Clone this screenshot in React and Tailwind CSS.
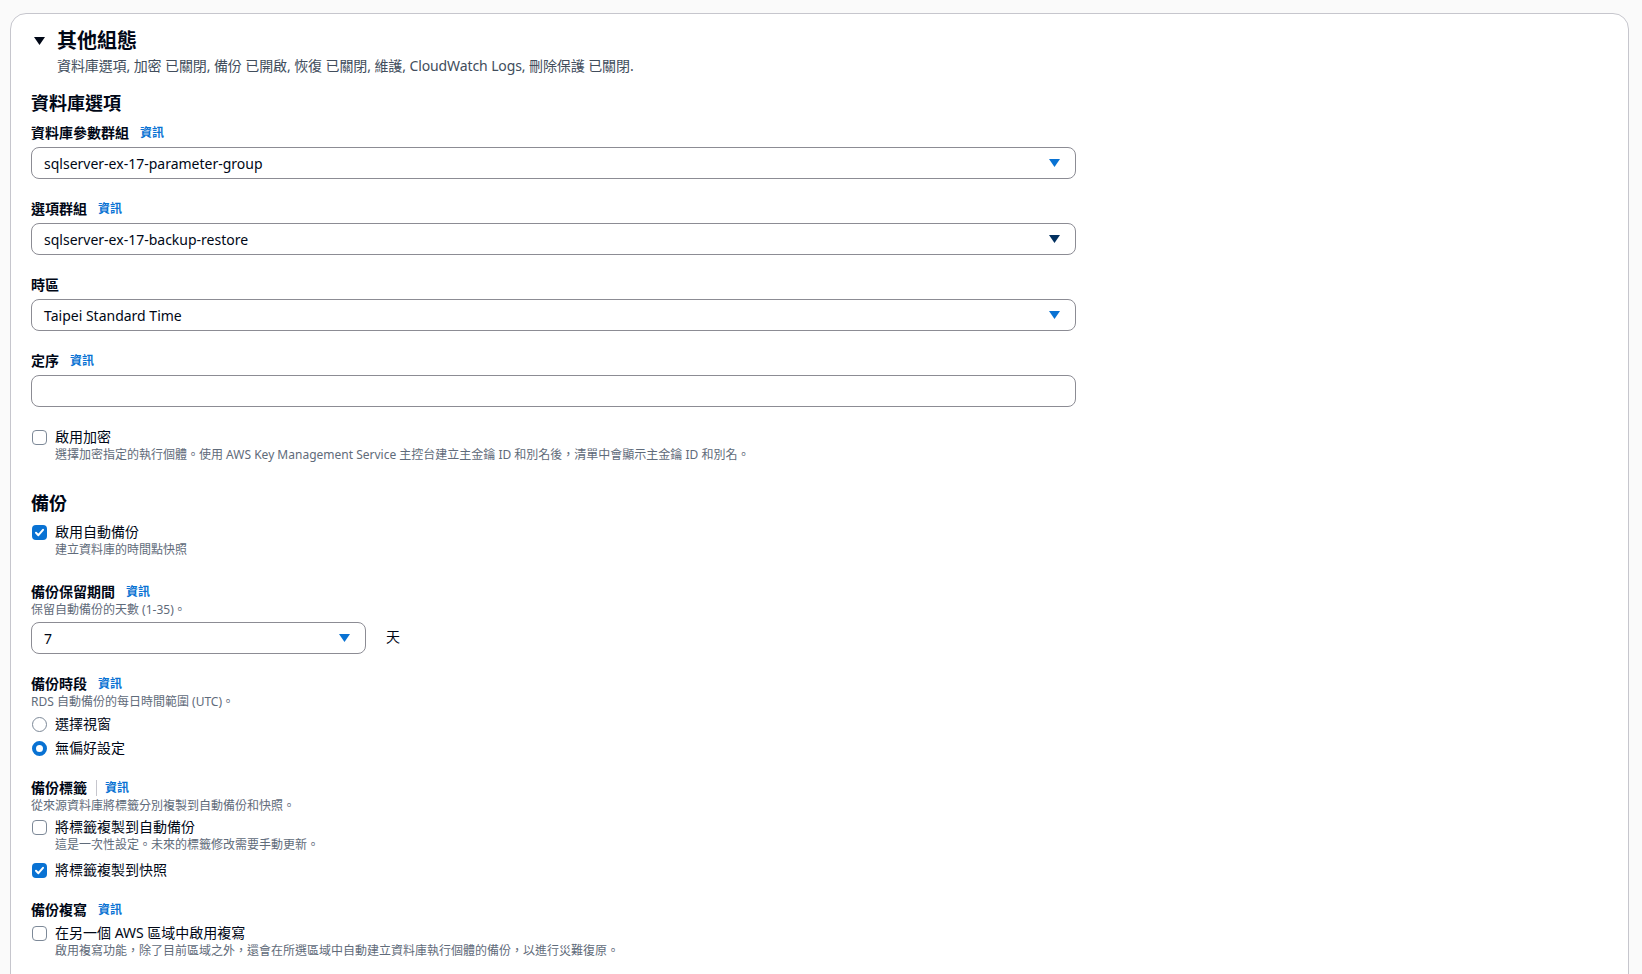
import React from 'react';

const font = "font-['Noto_Sans','Noto_Sans_CJK_TC',sans-serif]";

function Info({ className = '' }) {
  return (
    <a href="#" className={`text-[12px] font-bold leading-[20px] text-[#0972d3] ${className}`}>
      資訊
    </a>
  );
}

function Label({ children, info = true, divider = false }) {
  return (
    <div className="flex h-[20px] items-center">
      <span className="text-[14px] font-bold leading-[20px] text-[#000716]">{children}</span>
      {divider && <span className="ml-[9px] h-[16px] w-px bg-[#c6c6cd]"></span>}
      {info && <Info className={divider ? 'ml-[8px]' : 'ml-[11px]'} />}
    </div>
  );
}

function Hint({ children, className = '' }) {
  return <p className={`text-[12px] leading-[16px] text-[#5f6b7a] ${className}`}>{children}</p>;
}

function Arrow({ color = '#0972d3' }) {
  return (
    <svg width="11" height="8" viewBox="0 0 11 8" className="shrink-0">
      <path d="M0 0h11L5.5 8z" fill={color} />
    </svg>
  );
}

function Select({ value, arrow, className = 'w-[1045px]' }) {
  return (
    <div
      className={`flex h-[32px] items-center justify-between rounded-[8px] border border-[#8c8c94] bg-white pl-[12px] pr-[15px] text-[14px] text-[#000716] ${className}`}
    >
      <span>{value}</span>
      <Arrow color={arrow} />
    </div>
  );
}

function Checkbox({ checked, label, hint, className = '' }) {
  return (
    <div className={className}>
      <div className="flex h-[20px] items-center">
        {checked ? (
          <span className="ml-[1px] flex h-[15px] w-[15px] items-center justify-center rounded-[4px] bg-[#0972d3]">
            <svg width="11" height="11" viewBox="0 0 11 11">
              <path d="M2 5.8l2.4 2.4 4.6-5.4" fill="none" stroke="white" strokeWidth="2" strokeLinecap="round" strokeLinejoin="round" />
            </svg>
          </span>
        ) : (
          <span className="ml-[1px] h-[15px] w-[15px] rounded-[4px] border-[1.5px] border-[#7d8998] bg-white"></span>
        )}
        <span className="ml-[8px] text-[14px] leading-[20px] text-[#000716]">{label}</span>
      </div>
      {hint && <Hint className="pl-[24px]">{hint}</Hint>}
    </div>
  );
}

function Radio({ checked, label, className = '' }) {
  return (
    <div className={`flex h-[22px] items-center ${className}`}>
      {checked ? (
        <span className="ml-[1px] h-[15px] w-[15px] rounded-full border-[4px] border-[#0972d3] bg-white"></span>
      ) : (
        <span className="ml-[1px] h-[15px] w-[15px] rounded-full border-[1.5px] border-[#7d8998] bg-white"></span>
      )}
      <span className="ml-[8px] text-[14px] leading-[20px] text-[#000716]">{label}</span>
    </div>
  );
}

export default function App() {
  return (
    <main className={`min-h-screen bg-[#fafafa] pl-[10px] pr-[13px] pt-[13px] ${font}`}>
      <section className="rounded-t-[16px] border border-[#c6c6cd] bg-white px-[20px] pb-[40px] pt-[15px]">
        {/* Expandable header */}
        <div className="flex h-[24px] items-center">
          <svg width="11" height="8" viewBox="0 0 11 8" className="ml-[3px]">
            <path d="M0 0h11L5.5 8z" fill="#000716" />
          </svg>
          <h2 className="ml-[12px] text-[20px] font-bold leading-[24px] text-[#000716]">其他組態</h2>
        </div>
        <p className="mt-[3px] pl-[26px] text-[14px] leading-[20px] tracking-[-0.1px] text-[#414d5c]">
          資料庫選項, 加密 已關閉, 備份 已開啟, 恢復 已關閉, 維護, CloudWatch Logs, 刪除保護 已關閉.
        </p>

        {/* Database options */}
        <h3 className="mt-[16px] text-[18px] font-bold leading-[22px] text-[#000716]">資料庫選項</h3>

        <div className="mt-[9px]">
          <Label>資料庫參數群組</Label>
          <div className="mt-[4px]">
            <Select value="sqlserver-ex-17-parameter-group" />
          </div>
        </div>

        <div className="mt-[20px]">
          <Label>選項群組</Label>
          <div className="mt-[4px]">
            <Select value="sqlserver-ex-17-backup-restore" arrow="#033160" />
          </div>
        </div>

        <div className="mt-[20px]">
          <Label info={false}>時區</Label>
          <div className="mt-[4px]">
            <Select value="Taipei Standard Time" />
          </div>
        </div>

        <div className="mt-[20px]">
          <Label>定序</Label>
          <div className="mt-[4px] h-[32px] w-[1045px] rounded-[8px] border border-[#8c8c94] bg-white"></div>
        </div>

        <Checkbox
          className="mt-[20px]"
          label="啟用加密"
          hint="選擇加密指定的執行個體。使用 AWS Key Management Service 主控台建立主金鑰 ID 和別名後，清單中會顯示主金鑰 ID 和別名。"
        />

        {/* Backup */}
        <h3 className="mt-[29px] text-[18px] font-bold leading-[22px] text-[#000716]">備份</h3>
        <Checkbox className="mt-[8px]" checked label="啟用自動備份" hint="建立資料庫的時間點快照" />

        <div className="mt-[24px]">
          <Label>備份保留期間</Label>
          <Hint>保留自動備份的天數 (1-35)。</Hint>
          <div className="mt-[4px] flex items-center">
            <Select value="7" className="w-[335px]" />
            <span className="-mt-[4px] ml-[20px] text-[14px] text-[#000716]">天</span>
          </div>
        </div>

        <div className="mt-[20px]">
          <Label>備份時段</Label>
          <Hint>RDS 自動備份的每日時間範圍 (UTC)。</Hint>
          <Radio className="mt-[3px]" label="選擇視窗" />
          <Radio className="mt-[2px]" checked label="無偏好設定" />
        </div>

        <div className="mt-[19px]">
          <Label divider>備份標籤</Label>
          <Hint>從來源資料庫將標籤分別複製到自動備份和快照。</Hint>
          <Checkbox className="mt-[3px]" label="將標籤複製到自動備份" hint="這是一次性設定。未來的標籤修改需要手動更新。" />
          <Checkbox className="mt-[7px]" checked label="將標籤複製到快照" />
        </div>

        <div className="mt-[20px]">
          <Label>備份複寫</Label>
          <Checkbox
            className="mt-[3px]"
            label="在另一個 AWS 區域中啟用複寫"
            hint="啟用複寫功能，除了目前區域之外，還會在所選區域中自動建立資料庫執行個體的備份，以進行災難復原。"
          />
        </div>
      </section>
    </main>
  );
}
